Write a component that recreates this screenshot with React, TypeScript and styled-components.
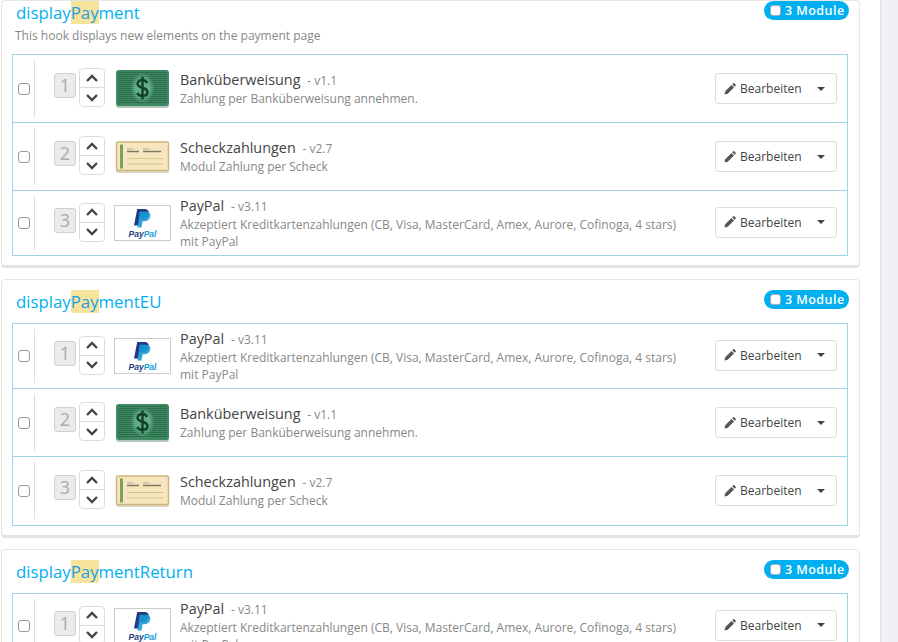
import React from "react";
import styled, { createGlobalStyle } from "styled-components";

const Global = createGlobalStyle`
  html, body { margin: 0; padding: 0; background: #fff; height: 642px; overflow: hidden; }
  body { font-family: "Open Sans", sans-serif; color: #555; }
  * { box-sizing: border-box; }
`;

const Page = styled.div`
  display: flex;
  height: 642px;
  overflow: hidden;
  background: #fff;
`;
const Main = styled.main`
  width: 880px;
  padding-left: 1px;
  flex: none;
`;
const Side = styled.aside`
  flex: 1;
  background: #eff0f3;
  border-left: 1px solid #dfe2e6;
`;
const Panel = styled.section`
  position: relative;
  width: 859px;
  margin-bottom: 11px;
  background: #fff;
  border: 1px solid #e6e6e6;
  border-bottom: 3px solid #e3e3e3;
  border-radius: 4px;
  padding: 0 10px 9px;
`;
const Title = styled.h3<{ $top: number }>`
  margin: 0;
  font-size: 16.8px;
  font-weight: 400;
  line-height: 23px;
  color: #00aff0;
  padding: ${(p) => p.$top}px 0 0 4px;
`;
const Mark = styled.span`
  background: #f6e39c;
  color: #1a9ee0;
`;
const Desc = styled.p`
  margin: 0;
  height: 30px;
  padding: 3px 0 0 3px;
  font-size: 12px;
  line-height: 18px;
  color: #888;
`;
const TitleGap = styled.div`
  height: 10px;
`;
const Badge = styled.div<{ $top: number }>`
  position: absolute;
  top: ${(p) => p.$top}px;
  right: 10px;
  height: 19px;
  width: 85px;
  border-radius: 10px;
  background: #00aff0;
  color: #fff;
  display: flex;
  align-items: center;
  gap: 4px;
  padding-left: 6px;
  font-size: 12.5px;
  font-weight: 600;
  letter-spacing: 0.45px;
`;
const BadgeBox = styled.span`
  width: 11px;
  height: 11px;
  border-radius: 3px;
  background: #fff;
  border: 1px solid #aab;
  flex: none;
`;
const List = styled.div<{ $pad: number }>`
  border: 1px solid #9fd3ea;
  width: 836px;
  padding-bottom: ${(p) => p.$pad}px;
`;
const Row = styled.div<{ $h: number }>`
  display: flex;
  align-items: center;
  box-sizing: content-box;
  height: ${(p) => p.$h - 10}px;
  border-bottom: 1px solid #9fd3ea;
  padding: 5px 10px 5px 5px;
  &:last-child { border-bottom: 0; }
`;
const Check = styled.span`
  width: 12px;
  height: 12px;
  flex: none;
  border: 1px solid #999;
  border-radius: 3px;
  background: #fff;
  margin-right: 4px;
`;
const Divider = styled.span`
  width: 1px;
  align-self: stretch;
  background: #ddd;
  margin: 0 19px 0 0;
  flex: none;
`;
const Pos = styled.span`
  width: 22px;
  height: 25px;
  flex: none;
  border: 1px solid #d0d0d0;
  border-radius: 3px;
  background: #ebebeb;
  color: #aaa;
  font-size: 18px;
  line-height: 23px;
  text-align: center;
  margin: 0 3px 6px 0;
`;
const Arrows = styled.div`
  width: 26px;
  height: 39px;
  flex: none;
  border: 1px solid #ddd;
  border-radius: 4px;
  display: flex;
  flex-direction: column;
  margin: 0 9px 2px 0;
  & > span { flex: 1; display: flex; align-items: center; justify-content: center; }
  & > span + span { border-top: 1px solid #ddd; }
`;
const Logo = styled.div`
  width: 57px;
  height: 40px;
  flex: none;
  display: flex;
  align-items: center;
  justify-content: center;
  margin-right: 9px;
`;
const LogoFrame = styled(Logo)`
  height: 36px;
  border: 1px solid #ccc;
  flex-direction: column;
  background: #fff;
  gap: 2px;
`;
const SoftIcon = styled.svg`
  filter: blur(0.35px);
`;
const PayPalWord = styled.span`
  font-family: "Liberation Sans", sans-serif;
  font-size: 8.5px;
  line-height: 8px;
  font-weight: 700;
  font-style: italic;
  color: #253b80;
  & > b { color: #179bd7; }
`;
const Info = styled.div`
  flex: 1;
  min-width: 0;
  padding-right: 20px;
`;
const Name = styled.div`
  font-size: 14.4px;
  line-height: 19px;
  color: #444;
`;
const Version = styled.span`
  font-size: 12px;
  color: #888;
  margin-left: 3px;
`;
const Text = styled.div`
  font-size: 12px;
  line-height: 17px;
  color: #888;
`;
const Edit = styled.div<{ $lift: boolean }>`
  width: 122px;
  height: 31px;
  flex: none;
  border: 1px solid #ddd;
  border-radius: 3px;
  display: flex;
  align-items: center;
  padding-left: 8px;
  font-size: 12px;
  color: #444;
  background: #fff;
  margin-bottom: ${(p) => (p.$lift ? 2 : 0)}px;
`;
const Caret = styled.span`
  width: 0;
  height: 0;
  margin-left: 15px;
  border-left: 4px solid transparent;
  border-right: 4px solid transparent;
  border-top: 4px solid #444;
`;
const PencilIcon = styled.svg`
  margin-right: 4px;
`;

const Chevron = ({ up }: { up?: boolean }) => (
  <svg width="14" height="9" viewBox="0 0 14 9">
    <path d={up ? "M2 7l5-5 5 5" : "M2 2l5 5 5-5"} fill="none" stroke="#444" strokeWidth="2.4" />
  </svg>
);

const Pencil = () => (
  <PencilIcon width="12" height="12" viewBox="0 0 12 12">
    <path d="M0.5 11.5l.7-3.2 6.3-6.3 2.5 2.5-6.3 6.3zM8.2 1.3l1-1a.8.8 0 0 1 1.1 0l1.4 1.4a.8.8 0 0 1 0 1.1l-1 1z" fill="#555" />
  </PencilIcon>
);

const BankIcon = ({ id }: { id: string }) => (
  <SoftIcon width="55" height="40" viewBox="0 0 55 40">
    <defs>
      <pattern id={`stripes${id}`} width="3" height="2" patternUnits="userSpaceOnUse">
        <rect width="3" height="2" fill="#2a6f4a" />
        <rect width="3" height="1" fill="#3f8763" />
      </pattern>
      <radialGradient id={`glow${id}`} cx="50%" cy="50%" r="50%">
        <stop offset="0.6" stopColor="#5fae86" />
        <stop offset="1" stopColor="#5fae86" stopOpacity="0" />
      </radialGradient>
    </defs>
    <rect x="1" y="2" width="53" height="37" rx="3" fill="#1c5b3a" opacity="0.35" />
    <rect x="1" y="1" width="53" height="36" rx="3" fill="#3d8a62" />
    <rect x="3" y="3" width="49" height="32" fill={`url(#stripes${id})`} />
    <ellipse cx="27.5" cy="19" rx="12" ry="15" fill={`url(#glow${id})`} />
    <path d="M32 14c-.8-2-2.600-3-4.500-3-2.800 0-5 1.500-5 3.800 0 5.200 10 2.700 10 8.200 0 2.600-2.300 4-5 4-2.500 0-4.300-1.100-5.200-3.100M27.500 7.500v23" fill="none" stroke="#143f29" strokeWidth="2.4" />
  </SoftIcon>
);

const ChequeIcon = () => (
  <SoftIcon width="55" height="32" viewBox="0 0 55 32">
    <rect x="1" y="2" width="53" height="30" rx="2" fill="#a08a55" opacity="0.35" />
    <rect x="1.500" y="1" width="52" height="28.500" rx="1.500" fill="#f5e6bd" stroke="#cdb67e" strokeWidth="1.500" />
    <rect x="5" y="3.500" width="3" height="24" fill="#7da05f" />
    <path d="M12 8h6M28 8h6" stroke="#aaa" strokeWidth="1" />
    <path d="M12 10.500h12M28 10.500h18" stroke="#7f7a66" strokeWidth="1.300" />
    <path d="M12 17.500h36M12 23h36" stroke="#d8c690" strokeWidth="1" />
  </SoftIcon>
);

const PayPalIcon = () => (
  <LogoFrame>
    <svg width="17" height="19" viewBox="0 0 17 19">
      <path d="M3.200 0h6.800c3.400 0 5.200 1.900 4.700 4.700-.6 3.800-3.300 5.600-6.600 5.600H5.700l-1.100 6.200H0z" fill="#253b80" />
      <path d="M5.700 2.800h6.100c3.200 0 4.900 1.700 4.500 4.400-.6 3.500-3.100 5.100-6.100 5.100H8.500l-1 6.200H3.400z" fill="#179bd7" opacity="0.9" />
    </svg>
    <PayPalWord>Pay<b>Pal</b></PayPalWord>
  </LogoFrame>
);

const bank = { name: "Banküberweisung", version: "v1.1", text: "Zahlung per Banküberweisung annehmen.", logo: "bank", h: 67 };
const check = { name: "Scheckzahlungen", version: "v2.7", text: "Modul Zahlung per Scheck", logo: "check", h: 67 };
const paypal = {
  name: "PayPal",
  version: "v3.11",
  text: "Akzeptiert Kreditkartenzahlungen (CB, Visa, MasterCard, Amex, Aurore, Cofinoga, 4 stars) mit PayPal",
  logo: "paypal",
  h: 64,
};

const hooks = [
  { suffix: "ment", desc: "This hook displays new elements on the payment page", mods: [bank, check, paypal], pad: 0 },
  { suffix: "mentEU", mods: [paypal, bank, check], pad: 1 },
  { suffix: "mentReturn", mods: [paypal, bank, check], pad: 1 },
];

export default function App() {
  return (
    <Page>
      <Global />
      <Main>
        {hooks.map((hook) => (
          <Panel key={hook.suffix}>
            <Title $top={hook.desc ? 0 : 10}>
              display<Mark>Pay</Mark>{hook.suffix}
            </Title>
            {hook.desc ? <Desc>{hook.desc}</Desc> : <TitleGap />}
            <Badge $top={hook.desc ? 0 : 10}>
              <BadgeBox />3 Module
            </Badge>
            <List $pad={hook.pad}>
              {hook.mods.map((m, i) => (
                <Row key={m.name} $h={m.h}>
                  <Check />
                  <Divider />
                  <Pos>{i + 1}</Pos>
                  <Arrows>
                    <span><Chevron up /></span>
                    <span><Chevron /></span>
                  </Arrows>
                  {m.logo === "paypal" ? (
                    <PayPalIcon />
                  ) : (
                    <Logo>{m.logo === "bank" ? <BankIcon id={hook.suffix} /> : <ChequeIcon />}</Logo>
                  )}
                  <Info>
                    <Name>
                      {m.name} <Version>- {m.version}</Version>
                    </Name>
                    <Text>{m.text}</Text>
                  </Info>
                  <Edit $lift={m.logo === "paypal"}>
                    <Pencil />
                    Bearbeiten
                    <Caret />
                  </Edit>
                </Row>
              ))}
            </List>
          </Panel>
        ))}
      </Main>
      <Side />
    </Page>
  );
}
